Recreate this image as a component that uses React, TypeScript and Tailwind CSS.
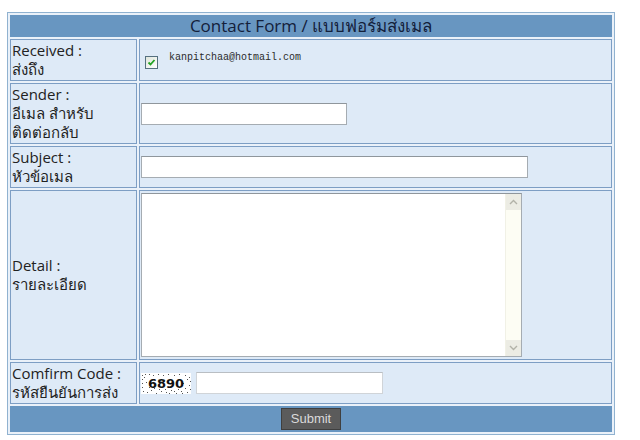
import { useState } from 'react';

// noise specks around the captcha digits
const specks: [number, number][] = [
    [1, 2], [1, 6], [1, 10], [1, 14], [2, 18], [4, 1], [8, 1], [12, 2], [17, 1], [22, 2], [27, 1],
    [33, 2], [38, 1], [44, 2], [48, 4], [49, 8], [48, 12], [49, 16], [46, 19], [40, 18], [35, 20],
    [30, 17], [25, 19], [20, 18], [15, 20], [10, 17], [6, 19], [44, 15], [42, 10], [5, 9], [13, 15],
    [37, 16], [28, 20], [18, 16], [8, 14], [46, 6], [3, 4], [24, 16], [33, 18], [41, 20],
];

function Captcha() {
    return (
        <div className="relative flex h-[21px] w-[50px] items-center justify-center bg-white">
            <svg className="absolute inset-0" width="50" height="21" viewBox="0 0 50 21">
                {specks.map(([x, y], i) => (
                    <rect key={i} x={x} y={y} width="1" height="1" fill="#555" />
                ))}
            </svg>
            <span className="relative text-[13px] font-bold leading-none text-[#111] [font-family:'DejaVu_Sans',sans-serif]">
                6890
            </span>
        </div>
    );
}

function CheckMark({ checked }: { checked: boolean }) {
    return (
        <span className="flex h-[13px] w-[13px] shrink-0 items-center justify-center border border-[#55707f] bg-gradient-to-br from-[#dfe6dc] to-[#ffffff]">
            {checked && (
                <svg width="11" height="11" viewBox="0 0 11 11">
                    <path d="M2.5 5.5 L4.5 7.5 L8.5 3" fill="none" stroke="#23a323" strokeWidth="1.8" />
                </svg>
            )}
        </span>
    );
}

function FakeScrollbar() {
    return (
        <div className="flex w-[16px] shrink-0 flex-col justify-between border-l border-[#f1f1e6] bg-[#fdfdf4]">
            <div className="flex h-[16px] items-center justify-center bg-[#ecece4]">
                <svg width="9" height="6" viewBox="0 0 9 6">
                    <path d="M1 5 L4.5 1.5 L8 5" fill="none" stroke="#b2b2a8" strokeWidth="1.4" />
                </svg>
            </div>
            <div className="flex h-[16px] items-center justify-center bg-[#ecece4]">
                <svg width="9" height="6" viewBox="0 0 9 6">
                    <path d="M1 1 L4.5 4.5 L8 1" fill="none" stroke="#b2b2a8" strokeWidth="1.4" />
                </svg>
            </div>
        </div>
    );
}

const label = 'w-[127px] border border-[#7d9ec4] bg-[#deeaf7] p-px text-left align-middle text-[15px] font-normal leading-[19px] text-[#222]';
const value = 'border border-[#7d9ec4] bg-[#deeaf7] p-px align-middle';
const input = 'block h-[22px] border border-[#a5acb2] border-t-[#8f969c] bg-white px-1 text-[13px] outline-none';

export default function App() {
    const [sender, setSender] = useState('');
    const [subject, setSubject] = useState('');
    const [detail, setDetail] = useState('');
    const [code, setCode] = useState('');

    return (
        <div className="min-h-[440px] bg-white pl-[7px] pt-[12px] [font-family:'Open_Sans','Noto_Sans',sans-serif]">
            <table className="w-[608px] border-separate border-spacing-[2px] border border-[#90b2d0] bg-[#eaf1f9]">
                <tbody>
                    <tr>
                        <th
                            colSpan={2}
                            className="h-[22px] border border-[#6896c1] bg-[#6896c1] p-0 text-center align-middle text-[17px] font-normal leading-[20px] text-[#13203a]"
                        >
                            Contact Form / แบบฟอร์มส่งเมล
                        </th>
                    </tr>
                    <tr>
                        <td className={label}>
                            Received :<br />ส่งถึง
                        </td>
                        <td className={value}>
                            <div className="flex items-start pl-[4px]">
                                <span className="mt-[4px]">
                                    <CheckMark checked />
                                </span>
                                <span className="ml-[11px] text-[10px] leading-[12px] text-[#2b2b2b] [font-family:'Liberation_Mono',monospace]">
                                    kanpitchaa@hotmail.com
                                </span>
                            </div>
                        </td>
                    </tr>
                    <tr>
                        <td className={label}>
                            Sender :<br />อีเมล สำหรับ<br />ติดต่อกลับ
                        </td>
                        <td className={value}>
                            <input
                                className={`${input} w-[206px]`}
                                value={sender}
                                onChange={(e) => setSender(e.target.value)}
                            />
                        </td>
                    </tr>
                    <tr>
                        <td className={label}>
                            Subject :<br />หัวข้อเมล
                        </td>
                        <td className={value}>
                            <input
                                className={`${input} w-[387px]`}
                                value={subject}
                                onChange={(e) => setSubject(e.target.value)}
                            />
                        </td>
                    </tr>
                    <tr>
                        <td className={`${label} h-[170px]`}>
                            Detail :<br />รายละเอียด
                        </td>
                        <td className={value}>
                            <div className="flex h-[164px] w-[381px] border border-[#a5acb2] border-t-[#8f969c] bg-white">
                                <textarea
                                    className="h-full flex-1 resize-none overflow-hidden p-1 text-[13px] outline-none"
                                    value={detail}
                                    onChange={(e) => setDetail(e.target.value)}
                                />
                                <FakeScrollbar />
                            </div>
                        </td>
                    </tr>
                    <tr>
                        <td className={label}>
                            Comfirm Code :<br />รหัสยืนยันการส่ง
                        </td>
                        <td className={value}>
                            <div className="flex items-center gap-[5px]">
                                <Captcha />
                                <input
                                    className={`${input} h-[20px] w-[187px] border-[#d0d4d8] border-t-[#b9bec3]`}
                                    value={code}
                                    onChange={(e) => setCode(e.target.value)}
                                />
                            </div>
                        </td>
                    </tr>
                    <tr>
                        <td colSpan={2} className="h-[26px] border border-[#6896c1] bg-[#6896c1] p-0 text-center align-middle">
                            <button
                                type="button"
                                className="mx-auto block h-[22px] w-[60px] border border-[#3f3f3f] bg-[#5b5b5b] text-[13px] leading-[20px] text-[#dadada] [font-family:'Liberation_Sans',Arial,sans-serif]"
                            >
                                Submit
                            </button>
                        </td>
                    </tr>
                </tbody>
            </table>
        </div>
    );
}
